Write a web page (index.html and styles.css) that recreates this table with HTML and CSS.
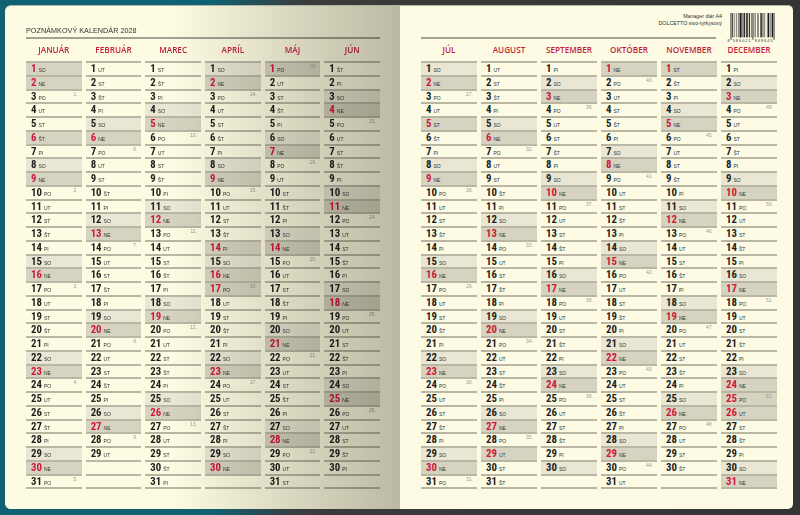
FILE: index.html
```html
<!DOCTYPE html>
<html lang="sk">
<head>
<meta charset="utf-8">
<title>Poznámkový kalendár 2028</title>
<link rel="stylesheet" href="styles.css">
</head>
<body>
<div class="spread">
  <div class="page left">
    <div class="lhead"><h1 class="title">POZNÁMKOVÝ KALENDÁR 2028</h1></div>
    <div class="months">
      <section class="month"><h2>JANUÁR</h2><ul>
        <li class="n"><b>1</b>SO</li><li class="n"><b>2</b>NE</li><li><b>3</b>PO<u>1.</u></li><li><b>4</b>UT</li><li><b>5</b>ST</li><li class="n"><b>6</b>ŠT</li><li><b>7</b>PI</li><li class="s"><b>8</b>SO</li><li class="n"><b>9</b>NE</li><li><b>10</b>PO<u>2.</u></li><li><b>11</b>UT</li><li><b>12</b>ST</li><li><b>13</b>ŠT</li><li><b>14</b>PI</li><li class="s"><b>15</b>SO</li><li class="n"><b>16</b>NE</li><li><b>17</b>PO<u>3.</u></li><li><b>18</b>UT</li><li><b>19</b>ST</li><li><b>20</b>ŠT</li><li><b>21</b>PI</li><li class="s"><b>22</b>SO</li><li class="n"><b>23</b>NE</li><li><b>24</b>PO<u>4.</u></li><li><b>25</b>UT</li><li><b>26</b>ST</li><li><b>27</b>ŠT</li><li><b>28</b>PI</li><li class="s"><b>29</b>SO</li><li class="n"><b>30</b>NE</li><li><b>31</b>PO<u>5.</u></li>
      </ul></section>
      <section class="month"><h2>FEBRUÁR</h2><ul>
        <li><b>1</b>UT</li><li><b>2</b>ST</li><li><b>3</b>ŠT</li><li><b>4</b>PI</li><li class="s"><b>5</b>SO</li><li class="n"><b>6</b>NE</li><li><b>7</b>PO<u>6.</u></li><li><b>8</b>UT</li><li><b>9</b>ST</li><li><b>10</b>ŠT</li><li><b>11</b>PI</li><li class="s"><b>12</b>SO</li><li class="n"><b>13</b>NE</li><li><b>14</b>PO<u>7.</u></li><li><b>15</b>UT</li><li><b>16</b>ST</li><li><b>17</b>ŠT</li><li><b>18</b>PI</li><li class="s"><b>19</b>SO</li><li class="n"><b>20</b>NE</li><li><b>21</b>PO<u>8.</u></li><li><b>22</b>UT</li><li><b>23</b>ST</li><li><b>24</b>ŠT</li><li><b>25</b>PI</li><li class="s"><b>26</b>SO</li><li class="n"><b>27</b>NE</li><li><b>28</b>PO<u>9.</u></li><li><b>29</b>UT</li><li></li><li></li>
      </ul></section>
      <section class="month"><h2>MAREC</h2><ul>
        <li><b>1</b>ST</li><li><b>2</b>ŠT</li><li><b>3</b>PI</li><li class="s"><b>4</b>SO</li><li class="n"><b>5</b>NE</li><li><b>6</b>PO<u>10.</u></li><li><b>7</b>UT</li><li><b>8</b>ST</li><li><b>9</b>ŠT</li><li><b>10</b>PI</li><li class="s"><b>11</b>SO</li><li class="n"><b>12</b>NE</li><li><b>13</b>PO<u>11.</u></li><li><b>14</b>UT</li><li><b>15</b>ST</li><li><b>16</b>ŠT</li><li><b>17</b>PI</li><li class="s"><b>18</b>SO</li><li class="n"><b>19</b>NE</li><li><b>20</b>PO<u>12.</u></li><li><b>21</b>UT</li><li><b>22</b>ST</li><li><b>23</b>ŠT</li><li><b>24</b>PI</li><li class="s"><b>25</b>SO</li><li class="n"><b>26</b>NE</li><li><b>27</b>PO<u>13.</u></li><li><b>28</b>UT</li><li><b>29</b>ST</li><li><b>30</b>ŠT</li><li><b>31</b>PI</li>
      </ul></section>
      <section class="month"><h2>APRÍL</h2><ul>
        <li class="s"><b>1</b>SO</li><li class="n"><b>2</b>NE</li><li><b>3</b>PO<u>14.</u></li><li><b>4</b>UT</li><li><b>5</b>ST</li><li><b>6</b>ŠT</li><li><b>7</b>PI</li><li class="s"><b>8</b>SO</li><li class="n"><b>9</b>NE</li><li><b>10</b>PO<u>15.</u></li><li><b>11</b>UT</li><li><b>12</b>ST</li><li><b>13</b>ŠT</li><li class="n"><b>14</b>PI</li><li class="s"><b>15</b>SO</li><li class="n"><b>16</b>NE</li><li class="n"><b>17</b>PO<u>16.</u></li><li><b>18</b>UT</li><li><b>19</b>ST</li><li><b>20</b>ŠT</li><li><b>21</b>PI</li><li class="s"><b>22</b>SO</li><li class="n"><b>23</b>NE</li><li><b>24</b>PO<u>17.</u></li><li><b>25</b>UT</li><li><b>26</b>ST</li><li><b>27</b>ŠT</li><li><b>28</b>PI</li><li class="s"><b>29</b>SO</li><li class="n"><b>30</b>NE</li><li></li>
      </ul></section>
      <section class="month"><h2>MÁJ</h2><ul>
        <li class="n"><b>1</b>PO<u>18.</u></li><li><b>2</b>UT</li><li><b>3</b>ST</li><li><b>4</b>ŠT</li><li><b>5</b>PI</li><li class="s"><b>6</b>SO</li><li class="n"><b>7</b>NE</li><li><b>8</b>PO<u>19.</u></li><li><b>9</b>UT</li><li><b>10</b>ST</li><li><b>11</b>ŠT</li><li><b>12</b>PI</li><li class="s"><b>13</b>SO</li><li class="n"><b>14</b>NE</li><li><b>15</b>PO<u>20.</u></li><li><b>16</b>UT</li><li><b>17</b>ST</li><li><b>18</b>ŠT</li><li><b>19</b>PI</li><li class="s"><b>20</b>SO</li><li class="n"><b>21</b>NE</li><li><b>22</b>PO<u>21.</u></li><li><b>23</b>UT</li><li><b>24</b>ST</li><li><b>25</b>ŠT</li><li><b>26</b>PI</li><li class="s"><b>27</b>SO</li><li class="n"><b>28</b>NE</li><li><b>29</b>PO<u>22.</u></li><li><b>30</b>UT</li><li><b>31</b>ST</li>
      </ul></section>
      <section class="month"><h2>JÚN</h2><ul>
        <li><b>1</b>ŠT</li><li><b>2</b>PI</li><li class="s"><b>3</b>SO</li><li class="n"><b>4</b>NE</li><li><b>5</b>PO<u>23.</u></li><li><b>6</b>UT</li><li><b>7</b>ST</li><li><b>8</b>ŠT</li><li><b>9</b>PI</li><li class="s"><b>10</b>SO</li><li class="n"><b>11</b>NE</li><li><b>12</b>PO<u>24.</u></li><li><b>13</b>UT</li><li><b>14</b>ST</li><li><b>15</b>ŠT</li><li><b>16</b>PI</li><li class="s"><b>17</b>SO</li><li class="n"><b>18</b>NE</li><li><b>19</b>PO<u>25.</u></li><li><b>20</b>UT</li><li><b>21</b>ST</li><li><b>22</b>ŠT</li><li><b>23</b>PI</li><li class="s"><b>24</b>SO</li><li class="n"><b>25</b>NE</li><li><b>26</b>PO<u>26.</u></li><li><b>27</b>UT</li><li><b>28</b>ST</li><li><b>29</b>ŠT</li><li><b>30</b>PI</li><li></li>
      </ul></section>
    </div>
  </div>
  <div class="page right">
    <div class="rhead">
      <div class="rmain">
        <p class="info">Manager diár A4<br>DOLCETTO sivo-tyrkysový</p>
      </div>
      <svg class="barcode" width="48" height="30" viewBox="-7 0 102 64" aria-label="EAN 8586021869645">
        <g fill="#1a1a1a">
          <rect x="0" y="0" width="1" height="57"/><rect x="2" y="0" width="1" height="57"/>
          <rect x="4" y="0" width="2" height="52"/><rect x="9" y="0" width="1" height="52"/>
          <rect x="13" y="0" width="1" height="52"/><rect x="16" y="0" width="1" height="52"/>
          <rect x="18" y="0" width="1" height="52"/><rect x="20" y="0" width="4" height="52"/>
          <rect x="25" y="0" width="1" height="52"/><rect x="28" y="0" width="3" height="52"/>
          <rect x="33" y="0" width="2" height="52"/><rect x="36" y="0" width="2" height="52"/>
          <rect x="40" y="0" width="2" height="52"/><rect x="44" y="0" width="1" height="52"/>
          <rect x="46" y="0" width="1" height="57"/><rect x="48" y="0" width="1" height="57"/>
          <rect x="50" y="0" width="1" height="52"/><rect x="53" y="0" width="1" height="52"/>
          <rect x="57" y="0" width="1" height="52"/><rect x="59" y="0" width="1" height="52"/>
          <rect x="64" y="0" width="3" height="52"/><rect x="68" y="0" width="1" height="52"/>
          <rect x="71" y="0" width="1" height="52"/><rect x="73" y="0" width="1" height="52"/>
          <rect x="78" y="0" width="1" height="52"/><rect x="80" y="0" width="3" height="52"/>
          <rect x="85" y="0" width="1" height="52"/><rect x="88" y="0" width="3" height="52"/>
          <rect x="92" y="0" width="1" height="57"/><rect x="94" y="0" width="1" height="57"/>
        </g>
        <g font-family="Liberation Sans, sans-serif" font-size="8" fill="#222">
          <text x="-6" y="62">8</text>
          <text x="5" y="62" textLength="38">586021</text>
          <text x="52" y="62" textLength="38">869645</text>
        </g>
      </svg>
    </div>
    <div class="months">
      <section class="month"><h2>JÚL</h2><ul>
        <li class="s"><b>1</b>SO</li><li class="n"><b>2</b>NE</li><li><b>3</b>PO<u>27.</u></li><li><b>4</b>UT</li><li class="n"><b>5</b>ST</li><li><b>6</b>ŠT</li><li><b>7</b>PI</li><li class="s"><b>8</b>SO</li><li class="n"><b>9</b>NE</li><li><b>10</b>PO<u>28.</u></li><li><b>11</b>UT</li><li><b>12</b>ST</li><li><b>13</b>ŠT</li><li><b>14</b>PI</li><li class="s"><b>15</b>SO</li><li class="n"><b>16</b>NE</li><li><b>17</b>PO<u>29.</u></li><li><b>18</b>UT</li><li><b>19</b>ST</li><li><b>20</b>ŠT</li><li><b>21</b>PI</li><li class="s"><b>22</b>SO</li><li class="n"><b>23</b>NE</li><li><b>24</b>PO<u>30.</u></li><li><b>25</b>UT</li><li><b>26</b>ST</li><li><b>27</b>ŠT</li><li><b>28</b>PI</li><li class="s"><b>29</b>SO</li><li class="n"><b>30</b>NE</li><li><b>31</b>PO<u>31.</u></li>
      </ul></section>
      <section class="month"><h2>AUGUST</h2><ul>
        <li><b>1</b>UT</li><li><b>2</b>ST</li><li><b>3</b>ŠT</li><li><b>4</b>PI</li><li class="s"><b>5</b>SO</li><li class="n"><b>6</b>NE</li><li><b>7</b>PO<u>32.</u></li><li><b>8</b>UT</li><li><b>9</b>ST</li><li><b>10</b>ŠT</li><li><b>11</b>PI</li><li class="s"><b>12</b>SO</li><li class="n"><b>13</b>NE</li><li><b>14</b>PO<u>33.</u></li><li><b>15</b>UT</li><li><b>16</b>ST</li><li><b>17</b>ŠT</li><li><b>18</b>PI</li><li class="s"><b>19</b>SO</li><li class="n"><b>20</b>NE</li><li><b>21</b>PO<u>34.</u></li><li><b>22</b>UT</li><li><b>23</b>ST</li><li><b>24</b>ŠT</li><li><b>25</b>PI</li><li class="s"><b>26</b>SO</li><li class="n"><b>27</b>NE</li><li><b>28</b>PO<u>35.</u></li><li class="n"><b>29</b>UT</li><li><b>30</b>ST</li><li><b>31</b>ŠT</li>
      </ul></section>
      <section class="month"><h2>SEPTEMBER</h2><ul>
        <li><b>1</b>PI</li><li class="s"><b>2</b>SO</li><li class="n"><b>3</b>NE</li><li><b>4</b>PO<u>36.</u></li><li><b>5</b>UT</li><li><b>6</b>ST</li><li><b>7</b>ŠT</li><li><b>8</b>PI</li><li class="s"><b>9</b>SO</li><li class="n"><b>10</b>NE</li><li><b>11</b>PO<u>37.</u></li><li><b>12</b>UT</li><li><b>13</b>ST</li><li><b>14</b>ŠT</li><li><b>15</b>PI</li><li class="s"><b>16</b>SO</li><li class="n"><b>17</b>NE</li><li><b>18</b>PO<u>38.</u></li><li><b>19</b>UT</li><li><b>20</b>ST</li><li><b>21</b>ŠT</li><li><b>22</b>PI</li><li class="s"><b>23</b>SO</li><li class="n"><b>24</b>NE</li><li><b>25</b>PO<u>39.</u></li><li><b>26</b>UT</li><li><b>27</b>ST</li><li><b>28</b>ŠT</li><li><b>29</b>PI</li><li class="s"><b>30</b>SO</li><li></li>
      </ul></section>
      <section class="month"><h2>OKTÓBER</h2><ul>
        <li class="n"><b>1</b>NE</li><li><b>2</b>PO<u>40.</u></li><li><b>3</b>UT</li><li><b>4</b>ST</li><li><b>5</b>ŠT</li><li><b>6</b>PI</li><li class="s"><b>7</b>SO</li><li class="n"><b>8</b>NE</li><li><b>9</b>PO<u>41.</u></li><li><b>10</b>UT</li><li><b>11</b>ST</li><li><b>12</b>ŠT</li><li><b>13</b>PI</li><li class="s"><b>14</b>SO</li><li class="n"><b>15</b>NE</li><li><b>16</b>PO<u>42.</u></li><li><b>17</b>UT</li><li><b>18</b>ST</li><li><b>19</b>ŠT</li><li><b>20</b>PI</li><li class="s"><b>21</b>SO</li><li class="n"><b>22</b>NE</li><li><b>23</b>PO<u>43.</u></li><li><b>24</b>UT</li><li><b>25</b>ST</li><li><b>26</b>ŠT</li><li><b>27</b>PI</li><li class="s"><b>28</b>SO</li><li class="n"><b>29</b>NE</li><li><b>30</b>PO<u>44.</u></li><li><b>31</b>UT</li>
      </ul></section>
      <section class="month"><h2>NOVEMBER</h2><ul>
        <li class="n"><b>1</b>ST</li><li><b>2</b>ŠT</li><li><b>3</b>PI</li><li class="s"><b>4</b>SO</li><li class="n"><b>5</b>NE</li><li><b>6</b>PO<u>45.</u></li><li><b>7</b>UT</li><li><b>8</b>ST</li><li><b>9</b>ŠT</li><li><b>10</b>PI</li><li class="s"><b>11</b>SO</li><li class="n"><b>12</b>NE</li><li><b>13</b>PO<u>46.</u></li><li><b>14</b>UT</li><li><b>15</b>ST</li><li><b>16</b>ŠT</li><li><b>17</b>PI</li><li class="s"><b>18</b>SO</li><li class="n"><b>19</b>NE</li><li><b>20</b>PO<u>47.</u></li><li><b>21</b>UT</li><li><b>22</b>ST</li><li><b>23</b>ŠT</li><li><b>24</b>PI</li><li class="s"><b>25</b>SO</li><li class="n"><b>26</b>NE</li><li><b>27</b>PO<u>48.</u></li><li><b>28</b>UT</li><li><b>29</b>ST</li><li><b>30</b>ŠT</li><li></li>
      </ul></section>
      <section class="month"><h2>DECEMBER</h2><ul>
        <li><b>1</b>PI</li><li class="s"><b>2</b>SO</li><li class="n"><b>3</b>NE</li><li><b>4</b>PO<u>49.</u></li><li><b>5</b>UT</li><li><b>6</b>ST</li><li><b>7</b>ŠT</li><li><b>8</b>PI</li><li class="s"><b>9</b>SO</li><li class="n"><b>10</b>NE</li><li><b>11</b>PO<u>50.</u></li><li><b>12</b>UT</li><li><b>13</b>ST</li><li><b>14</b>ŠT</li><li><b>15</b>PI</li><li class="s"><b>16</b>SO</li><li class="n"><b>17</b>NE</li><li><b>18</b>PO<u>51.</u></li><li><b>19</b>UT</li><li><b>20</b>ST</li><li><b>21</b>ŠT</li><li><b>22</b>PI</li><li class="s"><b>23</b>SO</li><li class="n"><b>24</b>NE</li><li class="n"><b>25</b>PO<u>52.</u></li><li class="n"><b>26</b>UT</li><li><b>27</b>ST</li><li><b>28</b>ŠT</li><li><b>29</b>PI</li><li class="s"><b>30</b>SO</li><li class="n"><b>31</b>NE</li>
      </ul></section>
    </div>
  </div>
</div>
</body>
</html>
```
FILE: styles.css
```css
* {
  box-sizing: border-box;
  margin: 0;
  padding: 0;
}

html, body {
  width: 800px;
  height: 515px;
  overflow: hidden;
}

body {
  background: linear-gradient(90deg, #0f6273 0%, #0f6273 26%, #3b3b3b 38%, #343434 100%);
  font-family: "Liberation Sans", Arial, sans-serif;
  color: #222;
}

.spread {
  display: flex;
  height: 515px;
  padding: 5px 7px 6px 5px;
}

.page {
  position: relative;
  height: 504px;
  border-top: 1px solid #b4b3a4;
}

.left {
  width: 395px;
  background: #fdfbe2;
  border-radius: 6px 0 0 6px;
  padding: 0 20px 0 21px;
  isolation: isolate;
}

.left::after {
  content: "";
  position: absolute;
  inset: 0;
  border-radius: inherit;
  background: linear-gradient(90deg, #ffffff 0%, #ffffff 42%, #bdbcb6 100%);
  mix-blend-mode: multiply;
  pointer-events: none;
}

.right {
  width: 393px;
  background: #fdfbe4;
  border-radius: 0 5px 5px 0;
  padding: 0 16px 0 21px;
}

/* headers */
.lhead {
  height: 33px;
  border-bottom: 2px solid #a4a292;
  display: flex;
  align-items: flex-end;
  padding-bottom: 2px;
}

.title {
  font-size: 7.2px;
  line-height: 9px;
  font-weight: 400;
  color: #333;
  letter-spacing: 0.05px;
}

.rhead {
  height: 33px;
  display: flex;
  align-items: flex-start;
}

.rmain {
  flex: 1;
  height: 33px;
  border-bottom: 2px solid #a4a292;
  margin-right: 11px;
  padding-top: 7px;
}

.info {
  font-size: 5.3px;
  line-height: 6.5px;
  text-align: right;
  color: #333;
  margin-right: -6px;
}

.barcode {
  flex: none;
  margin-top: 7px;
  margin-right: 2px;
  overflow: visible;
}

/* month grid */
.months {
  display: grid;
  grid-template-columns: repeat(6, 1fr);
  column-gap: 4px;
}

.month h2 {
  height: 22px;
  line-height: 21px;
  text-align: center;
  font-family: "Open Sans", "Liberation Sans", sans-serif;
  font-weight: 600;
  font-size: 8.2px;
  color: #c41f3e;
}

.month ul {
  list-style: none;
  border-top: 2px solid #b9b7a4;
}

.month li {
  height: 13.75px;
  border-bottom: 2px solid #b9b7a4;
  display: flex;
  align-items: baseline;
  padding: 0 4px 0 5px;
  line-height: 12px;
  font-size: 5px;
  color: #333;
}

.month li b {
  font-family: "Liberation Sans Narrow", "Arial Narrow", "Roboto Condensed", "Liberation Sans", sans-serif;
  font-weight: 700;
  font-size: 10.8px;
  line-height: 12px;
  color: #1e1e1e;
  margin-right: 2px;
}

.month li.s {
  background: #e9e7d4;
}

.month li.n {
  background: #d6d4c0;
}

.month li.n b {
  color: #d0163b;
}

.month li u {
  text-decoration: none;
  margin-left: auto;
  align-self: flex-start;
  font-size: 5px;
  line-height: 7px;
  color: #9c9a8a;
}
```
